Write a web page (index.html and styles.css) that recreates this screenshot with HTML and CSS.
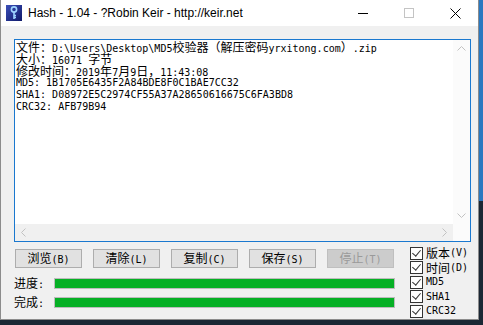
FILE: index.html
```html
<!DOCTYPE html>
<html lang="zh-CN">
<head>
  <meta charset="UTF-8" />
  <title>Hash - 1.04</title>
  <link rel="stylesheet" href="styles.css">
</head>
<body>

  <div class="window">
    <div class="titlebar">
      <svg class="app-icon" width="16" height="16" viewBox="0 0 16 16">
        <defs>
          <linearGradient id="iconBg" x1="0" y1="0" x2="1" y2="1">
            <stop offset="0" stop-color="#3b4fb8"/>
            <stop offset="1" stop-color="#101a6a"/>
          </linearGradient>
        </defs>
        <rect x="0" y="0" width="16" height="16" fill="url(#iconBg)"/>
        <circle cx="8" cy="4.5" r="2.6" fill="none" stroke="#9fd4ff" stroke-width="1.6"/>
        <path d="M8 7v7M8 10.5h2M8 12.5h2" stroke="#9fd4ff" stroke-width="1.6" fill="none"/>
      </svg>
      <span class="title">Hash - 1.04 - ?Robin Keir - http://keir.net</span>
      <div class="caption">
        <span class="cap-btn">
          <svg width="10" height="10" viewBox="0 0 10 10"><path d="M0 5.5h10" stroke="#000" stroke-width="1"/></svg>
        </span>
        <span class="cap-btn">
          <svg width="10" height="10" viewBox="0 0 10 10"><rect x="0.5" y="0.5" width="9" height="9" fill="none" stroke="#c4c4c4" stroke-width="1"/></svg>
        </span>
        <span class="cap-btn">
          <svg width="11" height="11" viewBox="0 0 11 11"><path d="M0.5 0.5l10 10M10.5 0.5l-10 10" stroke="#000" stroke-width="1"/></svg>
        </span>
      </div>
    </div>

    <div class="client">
      <div class="output">
        <div class="log">
          <div class="line"><span class="zh">文件：</span>D:\Users\Desktop\MD5<span class="zh">校验器（解压密码</span>yrxitong.com<span class="zh">）</span>.zip</div>
          <div class="line"><span class="zh">大小：</span>16071 <span class="zh">字节</span></div>
          <div class="line"><span class="zh">修改时间：</span>2019<span class="zh">年</span>7<span class="zh">月</span>9<span class="zh">日，</span>11:43:08</div>
          <div class="line">MD5: 1B1705E6435F2A84BDE8F0C1BAE7CC32</div>
          <div class="line">SHA1: D08972E5C2974CF55A37A28650616675C6FA3BD8</div>
          <div class="line">CRC32: AFB79B94</div>
        </div>
        <div class="vscroll">
          <svg width="9" height="5" viewBox="0 0 9 5"><path d="M0.5 4.5l4-4 4 4" fill="none" stroke="#c2c2c2"/></svg>
          <svg width="9" height="5" viewBox="0 0 9 5"><path d="M0.5 0.5l4 4 4-4" fill="none" stroke="#c2c2c2"/></svg>
        </div>
        <div class="hscroll">
          <svg width="5" height="9" viewBox="0 0 5 9"><path d="M4.5 0.5l-4 4 4 4" fill="none" stroke="#c2c2c2"/></svg>
          <svg width="5" height="9" viewBox="0 0 5 9"><path d="M0.5 0.5l4 4-4 4" fill="none" stroke="#c2c2c2"/></svg>
        </div>
        <div class="corner"></div>
      </div>

      <div class="controls">
        <div class="actions">
          <div class="buttons">
            <button><span class="zh">浏览</span>(B)</button>
            <button><span class="zh">清除</span>(L)</button>
            <button><span class="zh">复制</span>(C)</button>
            <button><span class="zh">保存</span>(S)</button>
            <button disabled><span class="zh">停止</span>(T)</button>
          </div>
          <div class="progress-row">
            <span class="progress-label"><span class="zh">进度</span>:</span>
            <div class="bar"></div>
          </div>
          <div class="progress-row">
            <span class="progress-label"><span class="zh">完成</span>:</span>
            <div class="bar"></div>
          </div>
        </div>

        <div class="checks">
          <label class="check"><span class="box"></span><span class="zh">版本</span>(V)</label>
          <label class="check"><span class="box"></span><span class="zh">时间</span>(D)</label>
          <label class="check"><span class="box"></span>MD5</label>
          <label class="check"><span class="box"></span>SHA1</label>
          <label class="check"><span class="box"></span>CRC32</label>
        </div>
      </div>
    </div>
  </div>

</body>
</html>
```

FILE: styles.css
```css
body {
  margin: 0;
  width: 483px;
  height: 325px;
  overflow: hidden;
  background: linear-gradient(to bottom, #2a78c0 0, #2a78c0 62%, #1b2734 62%, #1b2734 100%);
  font-family: "DejaVu Sans Mono", "Noto Sans CJK SC", monospace;
  font-size: 10px;
  line-height: 12px;
  color: #000;
}

.zh {
  font-family: "Noto Sans CJK SC", sans-serif;
  font-size: 12px;
  line-height: 12px;
}

.window {
  width: 479px;
  height: 320px;
  box-sizing: border-box;
  border: 1px solid #8c8c8c;
  border-top: none;
  background: #f0f0f0;
  display: flex;
  flex-direction: column;
}

.titlebar {
  height: 26px;
  flex: none;
  background: #fff;
  display: flex;
  align-items: center;
  padding-left: 5px;
}

.app-icon {
  flex: none;
}

.title {
  margin-left: 6px;
  font-family: "Liberation Sans", Arial, sans-serif;
  font-size: 12px;
  line-height: 16px;
  color: #000;
  flex: 1;
}

.caption {
  display: flex;
  height: 100%;
}

.cap-btn {
  width: 46px;
  display: flex;
  align-items: center;
  justify-content: center;
}

.client {
  padding: 13px 7px 0 13px;
}

/* edit box with its two scrollbars */
.output {
  height: 203px;
  box-sizing: border-box;
  border: 1px solid #1a78cf;
  background: #fff;
  display: grid;
  grid-template-columns: 1fr 17px;
  grid-template-rows: 1fr 17px;
}

.log {
  padding: 1px 0 0 1px;
  overflow: hidden;
}

.line {
  height: 12px;
  white-space: nowrap;
}

.vscroll {
  background: #fbfbfb;
  display: flex;
  flex-direction: column;
  justify-content: space-between;
  align-items: center;
  padding: 6px 0;
}

.hscroll {
  background: #f0f0f0;
  display: flex;
  justify-content: space-between;
  align-items: center;
  padding: 0 6px;
}

.corner {
  background: #fbfbfb;
}

.controls {
  display: flex;
  justify-content: space-between;
  margin-top: 4px;
}

.buttons {
  display: flex;
  gap: 11px;
  margin: 3px 0 0 1px;
}

button {
  width: 67px;
  height: 19px;
  padding: 0;
  background: #e1e1e1;
  border: 1px solid #adadad;
  border-radius: 0;
  font-family: "DejaVu Sans Mono", monospace;
  font-size: 10px;
  line-height: 12px;
  color: #000;
}

button:disabled {
  background: #cccccc;
  border-color: #bfbfbf;
  color: #9a9a9a;
}

.progress-row {
  display: flex;
  align-items: center;
  height: 19px;
}

.buttons + .progress-row {
  margin-top: 6px;
}

.progress-label {
  width: 40px;
}

.bar {
  width: 341px;
  height: 11px;
  box-sizing: border-box;
  background: #06b025;
  border: 1px solid #bcbcbc;
}

.checks {
  display: flex;
  flex-direction: column;
  width: 61px;
}

.check {
  height: 14.5px;
  display: flex;
  align-items: center;
  white-space: nowrap;
}

.box {
  width: 13px;
  height: 13px;
  box-sizing: border-box;
  border: 1px solid #333;
  background: #fff;
  margin-right: 3px;
  flex: none;
  position: relative;
}

.box::after {
  content: "";
  position: absolute;
  left: 3px;
  top: 0px;
  width: 4px;
  height: 7px;
  border: solid #333;
  border-width: 0 1px 1px 0;
  transform: rotate(40deg);
}
```
